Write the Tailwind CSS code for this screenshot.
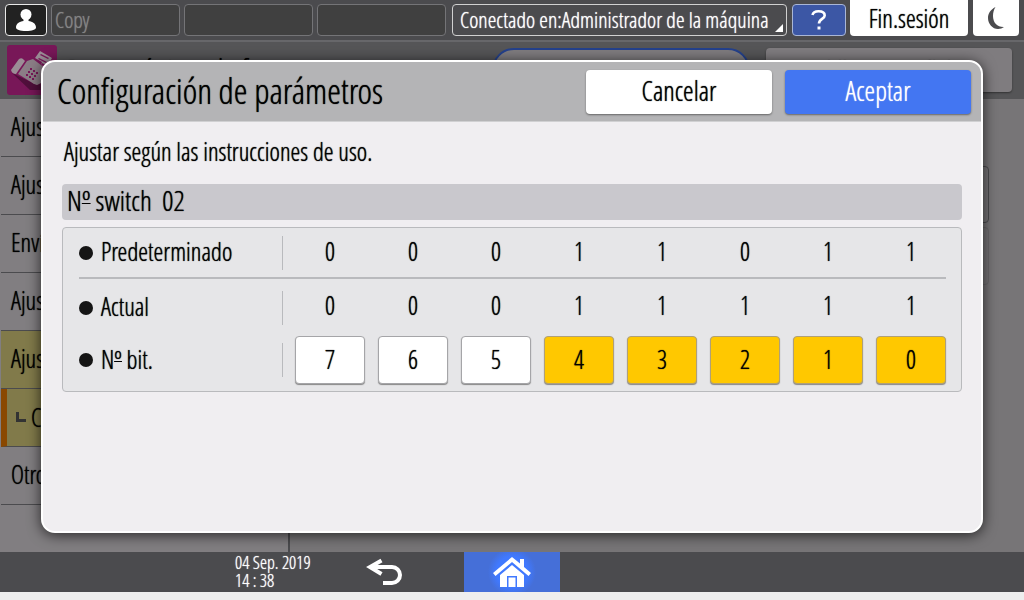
<!DOCTYPE html>
<html lang="es">
<head>
    <meta charset="UTF-8">
    <meta name="viewport" content="width=device-width, initial-scale=1.0">
    <title>Configuración de parámetros</title>
    <script src="https://cdn.jsdelivr.net/npm/@tailwindcss/browser@4"></script>
    <style>
        body, button {
            text-shadow: 0 0 1px currentColor;
        }
    </style>
</head>
<body class="min-h-screen flex flex-col bg-[#eeeeee] pb-2 font-['Open_Sans_Condensed_Light','Roboto_Condensed','Liberation_Sans',sans-serif] text-black">

    <div class="relative flex-1 flex flex-col">

        <!-- Barra superior -->
        <header class="h-10 flex items-start bg-[#4b4b4e] pl-[5px] pr-[5px] whitespace-nowrap">
            <button aria-label="Usuario" class="mt-1 h-8 w-[42px] shrink-0 rounded border border-[#e8e8e8] bg-[#222222] flex items-center justify-center">
                <svg class="w-5 h-[22px]" viewBox="0 0 20 22" fill="#fff"><circle cx="10" cy="5.5" r="5.5"/><path d="M7.5 9h5v3c4 .6 7.500 2.500 7.500 6.500 0 2-4 3.500-10 3.500S0 20.500 0 18.500C0 14.500 3.500 12.600 7.500 12z"/></svg>
            </button>
            <button class="mt-1 ml-1 h-8 flex-1 rounded border border-[#747477] bg-[#404040] pb-[2px] text-left text-[22px] leading-[28px] text-[#858585]"><span class="ml-[3px]">Copy</span></button>
            <button aria-label="Función 2" class="mt-1 ml-1 h-8 flex-1 rounded border border-[#747477] bg-[#404040]"></button>
            <button aria-label="Función 3" class="mt-1 ml-1 h-8 flex-1 rounded border border-[#747477] bg-[#404040]"></button>
            <button class="relative mt-1 ml-[6px] h-8 w-[335px] shrink-0 rounded border border-[#d0d0d0] px-[7px] pb-[2px] text-left text-[22px] leading-[28px] text-white">
                Conectado en:Administrador de la máquina
                <svg class="absolute right-[3px] bottom-[3px] size-2" viewBox="0 0 8 8" fill="#fff"><path d="M8 0v8H0z"/></svg>
            </button>
            <button aria-label="Ayuda" class="mt-1 ml-[5px] h-8 w-[54px] shrink-0 rounded border border-[#a9b6d6] bg-[#3c57a5] flex items-center justify-center">
                <svg class="w-4 h-5" viewBox="0 0 16 20" fill="none" stroke="#fff" stroke-width="2.600"><path d="M1.500 5C2 2.500 4.500 1.300 7.500 1.300c4 0 6.200 1.700 6.200 4.200 0 3.500-5.700 3.500-5.700 8"/><path d="M6.500 18H9.500" stroke-width="3"/></svg>
            </button>
            <button class="ml-1 h-9 w-[118px] shrink-0 rounded-b bg-white text-[25px] leading-9">Fin.sesión</button>
            <button aria-label="Ahorro de energía" class="ml-[5px] h-9 w-[46px] shrink-0 rounded-b bg-white flex items-center justify-center">
                <svg class="w-4 h-[22px]" viewBox="0 0 16 22" fill="#4b4b4e"><path d="M7.500 0C2.500 2.500 0 6.500 0 11c0 6 4.500 11 10 11 2.300 0 4.400-.7 6-2-6.500.3-11-4.200-11-11 0-3.500.8-6.500 2.500-9z"/></svg>
            </button>
        </header>

        <!-- Pantalla de fondo, atenuada -->
        <div class="h-[59px] flex items-start border-t-2 border-[#67676a] bg-[#555557] pl-[7px] pr-3 overflow-hidden">
            <svg class="mt-[3px] size-[50px] shrink-0" viewBox="0 0 50 50">
                <rect width="50" height="50" rx="3" fill="#781758"/>
                <path d="M5 28l18 17h17l10-7v-8L30 40z" fill="#500f3b"/>
                <path d="M12 14q3-2 5 1l1 1L9 29q-4 0-5-4z" fill="#9b8d96"/>
                <path d="M11 29l9-13 6-2 8 6 8 6v8l-12 6q-4-1-6-3z" fill="#8b7d86"/>
                <path d="M28 13l5-7 12 7-6 11-5-4 1-3z" fill="#9b8d96"/>
                <g fill="#781758"><path d="M23 23h2v2h-2zM26 25h2v2h-2zM21 26h2v2h-2zM24 28h2v2h-2zM29 27h2v2h-2zM27 30h2v2h-2zM19 29h2v2h-2zM22 31h2v2h-2zM25 33h2v2h-2zM34 9l8 4-1 1-8-4zM32 13l8 4-1 1-8-4zM35 18l4 2-1 2-4-2z"/></g>
            </svg>
            <h2 class="mt-[10px] ml-[6px] w-[429px] shrink-0 text-[31px] leading-9">Características de fax</h2>
            <div class="mt-[6px] h-11 w-[258px] shrink-0 rounded-[22px] border-2 border-[#24418c] bg-[#7f7c7f] flex items-center pl-4">
                <span class="size-5 rounded-full bg-[#24418c]"></span>
            </div>
            <button class="mt-[6px] ml-4 h-11 flex-1 rounded bg-[#7f7c7f] pb-[3px] text-[25px] leading-9 shadow-[0_1px_2px_#333]">Idioma español</button>
        </div>
        <div class="flex-1 flex bg-[#777577]">
            <nav class="w-[290px] pl-px border-r-2 border-[#4b4b4e] bg-[#817e81] text-[25px] leading-[54px]">
                <a href="#" class="block h-[58px] border-b border-[#4b4b4e] pl-[10px]">Ajustes</a>
                <a href="#" class="block h-[58px] border-b border-[#4b4b4e] pl-[10px]">Ajustes</a>
                <a href="#" class="block h-[58px] border-b border-[#4b4b4e] pl-[10px]">Envío</a>
                <a href="#" class="block h-[58px] border-b border-[#4b4b4e] pl-[10px]">Ajustes</a>
                <a href="#" class="block h-[58px] border-b border-[#4b4b4e] bg-[#817a4a] pl-[10px]">Ajustes</a>
                <a href="#" class="flex h-[58px] items-center border-b border-l-[6px] border-[#4b4b4e] border-l-[#8a4800] bg-[#817a4a] pb-[2px] pl-[9px]">
                    <svg class="size-[10px] mr-[5px]" viewBox="0 0 10 10" fill="none" stroke="#333" stroke-width="3"><path d="M1.500 0v8.500H10"/></svg>
                    Conf.
                </a>
                <a href="#" class="block h-[58px] border-b border-[#4b4b4e] pl-[10px]">Otros</a>
            </nav>
            <div class="flex-1 pt-[67px] pr-[35px]">
                <div class="h-[57px] rounded border border-[#4b4b4e]"></div>
                <div class="mt-1 h-[58px] rounded border border-[#6b696b]"></div>
            </div>
        </div>

        <!-- Cuadro de diálogo -->
        <div role="dialog" aria-labelledby="dialog-title" class="absolute top-[60px] bottom-[19px] inset-x-[41px] overflow-hidden rounded-[14px] border-2 border-white bg-[#f0eef1] shadow-[0_2px_14px_rgba(0,0,0,0.7)]">
            <div class="h-[60px] flex items-center gap-[13px] border-b border-[#d0d0d2] bg-[#b4b4b6] pt-px pl-[14px] pr-[10px]">
                <h1 id="dialog-title" class="flex-1 pb-[3px] text-[35px] leading-10">Configuración de parámetros</h1>
                <button class="h-11 w-[186px] rounded bg-white pb-[2px] text-[27px] leading-10 shadow-[0_1px_2px_#666]">Cancelar</button>
                <button class="h-11 w-[186px] rounded bg-[#4376f2] pb-[2px] text-[27px] leading-10 text-white shadow-[0_1px_2px_#666]">Aceptar</button>
            </div>
            <div class="px-[19px] pt-[13px]">
                <p class="pl-[2px] text-[25px] leading-8">Ajustar según las instrucciones de uso.</p>
                <h2 class="mt-[17px] h-9 rounded bg-[#c9c8cd] pl-[5px] text-[28px] leading-8 whitespace-pre">N<span class="underline underline-offset-[-8px] decoration-1">º</span> switch  02</h2>
                <div class="mt-[7px] rounded border border-[#b9babd] bg-[#e6e6e8] pl-4 pr-[15px] pb-[7px]">
                    <table class="w-full table-fixed text-center text-[25px] leading-8">
                        <colgroup><col class="w-[203px]"><col span="8"></colgroup>
                        <tbody>
                            <tr class="h-[50px] border-b-2 border-[#b9babd]">
                                <th scope="row" class="p-0 font-normal"><div class="-mr-px h-[34px] flex items-center gap-2 border-r border-[#b9babd]"><span class="size-[14px] rounded-full bg-[#151515]"></span><span class="pb-[3px]">Predeterminado</span></div></th>
                                <td class="pl-[13px] pb-[4px]">0</td><td class="pl-[13px] pb-[4px]">0</td><td class="pl-[13px] pb-[4px]">0</td><td class="pl-[13px] pb-[4px]">1</td><td class="pl-[13px] pb-[4px]">1</td><td class="pl-[13px] pb-[4px]">0</td><td class="pl-[13px] pb-[4px]">1</td><td class="pl-[13px] pb-[4px]">1</td>
                            </tr>
                            <tr class="h-[58px]">
                                <th scope="row" class="p-0 font-normal"><div class="-mr-px h-[34px] flex items-center gap-2 border-r border-[#b9babd]"><span class="size-[14px] rounded-full bg-[#151515]"></span><span class="pb-[3px]">Actual</span></div></th>
                                <td class="pl-[13px] pb-[5px]">0</td><td class="pl-[13px] pb-[5px]">0</td><td class="pl-[13px] pb-[5px]">0</td><td class="pl-[13px] pb-[5px]">1</td><td class="pl-[13px] pb-[5px]">1</td><td class="pl-[13px] pb-[5px]">1</td><td class="pl-[13px] pb-[5px]">1</td><td class="pl-[13px] pb-[5px]">1</td>
                            </tr>
                            <tr class="h-12">
                                <th scope="row" class="p-0 font-normal"><div class="-mr-px h-[34px] flex items-center gap-2 border-r border-[#b9babd]"><span class="size-[14px] rounded-full bg-[#151515]"></span><span class="pb-[3px]">N<span class="underline underline-offset-[-8px] decoration-1">º</span> bit.</span></div></th>
                                <td class="pl-[13px]"><button aria-pressed="false" class="block w-full h-12 rounded border border-[#a5a5a8] bg-white pb-[2px] shadow-[0_1px_1px_#888]">7</button></td>
                                <td class="pl-[13px]"><button aria-pressed="false" class="block w-full h-12 rounded border border-[#a5a5a8] bg-white pb-[2px] shadow-[0_1px_1px_#888]">6</button></td>
                                <td class="pl-[13px]"><button aria-pressed="false" class="block w-full h-12 rounded border border-[#a5a5a8] bg-white pb-[2px] shadow-[0_1px_1px_#888]">5</button></td>
                                <td class="pl-[13px]"><button aria-pressed="true" class="block w-full h-12 rounded border border-[#b0a078] bg-[#ffc800] pb-[2px] shadow-[0_1px_1px_#888]">4</button></td>
                                <td class="pl-[13px]"><button aria-pressed="true" class="block w-full h-12 rounded border border-[#b0a078] bg-[#ffc800] pb-[2px] shadow-[0_1px_1px_#888]">3</button></td>
                                <td class="pl-[13px]"><button aria-pressed="true" class="block w-full h-12 rounded border border-[#b0a078] bg-[#ffc800] pb-[2px] shadow-[0_1px_1px_#888]">2</button></td>
                                <td class="pl-[13px]"><button aria-pressed="true" class="block w-full h-12 rounded border border-[#b0a078] bg-[#ffc800] pb-[2px] shadow-[0_1px_1px_#888]">1</button></td>
                                <td class="pl-[13px]"><button aria-pressed="true" class="block w-full h-12 rounded border border-[#b0a078] bg-[#ffc800] pb-[2px] shadow-[0_1px_1px_#888]">0</button></td>
                            </tr>
                        </tbody>
                    </table>
                </div>
            </div>
        </div>
    </div>

    <!-- Barra inferior -->
    <footer class="h-10 grid grid-cols-[1fr_96px_1fr] bg-[#4b4b4e]">
        <div class="flex items-center justify-end text-white">
            <p class="w-[131px] pb-[2px] text-[18px] leading-[18px]">04 Sep. 2019<br>14 : 38</p>
            <button aria-label="Volver" class="mr-[62px]">
                <svg class="w-9 h-7" viewBox="0 0 36 28" fill="none" stroke="#fff" stroke-width="4"><path d="M4 9h22a8 8 0 0 1 0 16H17"/><path d="M15.500 2.500L4 9l11.500 7"/></svg>
            </button>
        </div>
        <button aria-label="Inicio" class="bg-[radial-gradient(circle_at_center,#4079ff_30%,#456fd8_46%)] flex items-center justify-center">
            <svg class="w-[38px] h-[30px]" viewBox="0 0 38 30" fill="#fff"><path d="M19 0l8 6.500V2h4v8l7 6-2.500 3L19 5 2.500 19 0 16z"/><path fill-rule="evenodd" d="M19 8l12 10v12H7V18zM14 19v11h10V19z"/><path d="M15.500 20.500h7V30h-7z"/></svg>
        </button>
    </footer>

</body>
</html>
